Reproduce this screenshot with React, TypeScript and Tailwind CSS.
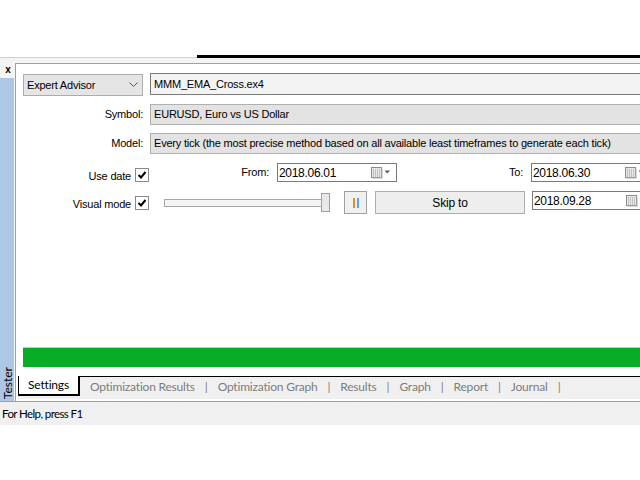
import React from 'react'

function CalendarIcon() {
  return (
    <svg width="20" height="12" viewBox="0 0 20 12" className="shrink-0">
      <rect x="0.5" y="0.5" width="10" height="10" fill="#e8e8e8" stroke="#8c8c8c" />
      <rect x="10.5" y="2" width="1" height="9" fill="#b0b0b0" />
      <rect x="1.5" y="10.5" width="10" height="1" fill="#b0b0b0" />
      {[2.5, 4.5, 6.5, 8.5].map((y) =>
        [2, 4, 6, 8].map((x) => <rect key={`${x}-${y}`} x={x} y={y} width="1" height="1" fill="#9a9a9a" />)
      )}
      <path d="M13.5 3.5 L19 3.5 L16.25 6.5 Z" fill="#4a5d78" />
    </svg>
  )
}

function Check() {
  return (
    <div className="w-[14px] h-[14px] border border-[#8a8a8a] bg-white flex items-center justify-center shrink-0">
      <svg width="10" height="10" viewBox="0 0 10 10">
        <path d="M1.5 5 L4 7.5 L8.5 2" fill="none" stroke="#000" strokeWidth="2" />
      </svg>
    </div>
  )
}

function DateBox({ value, w }: { value: string; w: string }) {
  return (
    <div className={`${w} h-[19px] border border-[#7a7a7a] bg-white flex items-center pl-[1px] shrink-0`}>
      <span className="flex-1 text-[12px] leading-none text-black tracking-[-0.3px]">{value}</span>
      <CalendarIcon />
      <span className="w-[5px]" />
    </div>
  )
}

const tabs = ['Optimization Results', 'Optimization Graph', 'Results', 'Graph', 'Report', 'Journal']

export default function App() {
  return (
    <div className="w-[640px] h-[480px] bg-white overflow-hidden flex flex-col font-['Liberation_Sans',Arial,sans-serif] text-[11px] tracking-[-0.2px] text-black">
      <div className="h-[55px] shrink-0" />
      <div className="h-[3px] flex shrink-0">
        <div className="w-[197px] border-b border-[#cfcfcf]" />
        <div className="flex-1 bg-black" />
      </div>
      <div className="h-[5px] bg-[#f4f4f4] shrink-0" />

      <div className="h-[338px] flex shrink-0">
        {/* Left tester strip */}
        <div className="w-[15px] bg-[#f5f5f5] flex flex-col shrink-0">
          <div className="h-[13px] flex items-center justify-center pl-[1px] text-[10px] font-bold leading-none">x</div>
          <div className="flex-1 mt-[2px] bg-[#aec7e4] mr-[1px] flex flex-col items-center justify-end overflow-hidden">
            <span className="block [writing-mode:vertical-rl] rotate-180 whitespace-nowrap text-[12px] leading-[13px] mb-[2px] font-['Lato',sans-serif] tracking-normal text-black">
              Tester
            </span>
          </div>
        </div>

        {/* Main */}
        <div className="flex-1 border-l border-t border-[#a0a0a0] flex flex-col min-w-0">
          <div className="pl-[7px] flex flex-col w-[700px]">
            {/* Row 1 */}
            <div className="flex items-start mt-[9px]">
              <div className="w-[120px] h-[22px] mt-[1px] bg-[#e5e5e5] border border-[#acacac] flex items-center pl-[3px] pr-[4px] shrink-0">
                <span className="flex-1">Expert Advisor</span>
                <svg width="9" height="6" viewBox="0 0 9 6">
                  <path d="M0.5 0.5 L4.5 4.5 L8.5 0.5" fill="none" stroke="#555" strokeWidth="1" />
                </svg>
              </div>
              <div className="ml-[7px] w-[520px] h-[22px] bg-[#f3f3f3] border border-[#7a7a7a] flex items-center pl-[3px]">
                MMM_EMA_Cross.ex4
              </div>
            </div>

            {/* Row 2 */}
            <div className="flex items-center mt-[8px]">
              <div className="w-[120px] text-right shrink-0">Symbol:</div>
              <div className="ml-[7px] w-[520px] h-[21px] bg-[#e3e3e3] border border-[#b0b0b0] flex items-center pl-[3px]">
                EURUSD, Euro vs US Dollar
              </div>
            </div>

            {/* Row 3 */}
            <div className="flex items-center mt-[8px]">
              <div className="w-[120px] text-right shrink-0">Model:</div>
              <div className="ml-[7px] w-[520px] h-[21px] bg-[#e3e3e3] border border-[#b0b0b0] flex items-center pl-[3px]">
                Every tick (the most precise method based on all available least timeframes to generate each tick)
              </div>
            </div>

            {/* Row 4 */}
            <div className="flex items-start mt-[9px] h-[19px]">
              <div className="w-[108px] text-right mt-[5px] shrink-0">Use date</div>
              <div className="ml-[4px] mt-[5px]">
                <Check />
              </div>
              <div className="w-[120px] text-right mt-[1px] shrink-0">From:</div>
              <div className="ml-[8px]">
                <DateBox value="2018.06.01" w="w-[120px]" />
              </div>
              <div className="w-[126px] text-right mt-[1px] shrink-0">To:</div>
              <div className="ml-[8px]">
                <DateBox value="2018.06.30" w="w-[120px]" />
              </div>
            </div>

            {/* Row 5 */}
            <div className="flex items-start mt-[9px] h-[23px]">
              <div className="w-[108px] text-right mt-[5px] shrink-0">Visual mode</div>
              <div className="ml-[4px] mt-[5px]">
                <Check />
              </div>
              <div className="ml-[15px] w-[166px] h-[23px] flex items-center relative shrink-0">
                <div className="w-full h-[8px] border border-[#a8a8a8] bg-[#f4f4f4]" />
                <div className="absolute right-0 top-[2px] w-[9px] h-[19px] bg-[#e8e8e8] border border-[#a0a0a0]" />
              </div>
              <div className="ml-[14px] w-[23px] h-[23px] border border-[#a0a0a0] bg-[#f0f0f0] flex items-center justify-center gap-[2px] shrink-0">
                <div className="w-[2px] h-[10px] bg-[#e48a2f]" />
                <div className="w-[2px] h-[10px] bg-[#4aa6f2]" />
              </div>
              <div className="ml-[8px] w-[150px] h-[23px] border border-[#adadad] bg-[#eeeeee] flex items-center justify-center shrink-0 text-[12px]">
                Skip to
              </div>
              <div className="ml-[7px]">
                <DateBox value="2018.09.28" w="w-[120px]" />
              </div>
            </div>
          </div>

          <div className="flex-1" />

          {/* Progress */}
          <div className="ml-[7px] h-[20px] border-t border-[#c8c8c8] bg-[#06ad26]" />

          {/* Tabs */}
          <div className="mt-[9px] ml-[2px] h-[23px] border-t border-black bg-[#f0f0f0] flex items-start font-['Lato',sans-serif] text-[12px] tracking-[-0.2px] shrink-0">
            <div className="w-[62px] h-[20px] -mt-[1px] bg-white border-l border-r-2 border-b-2 border-black flex items-center justify-center text-black">
              Settings
            </div>
            {tabs.map((t) => (
              <div key={t} className="flex items-center h-[19px] text-[#7d7d7d]">
                <span className="ml-[10px]">{t}</span>
                <span className="ml-[10px]">|</span>
              </div>
            ))}
          </div>
          <div className="h-[2px] bg-white" />
        </div>
      </div>

      {/* Status bar */}
      <div className="h-[1px] bg-[#a0a0a0] shrink-0" />
      <div className="h-[23px] bg-[#f0f0f0] flex items-center pl-[2px] font-['Lato',sans-serif] text-[11.5px] tracking-[-0.6px] shrink-0">
        For Help, press F1
      </div>
      <div className="flex-1 bg-white" />
    </div>
  )
}
